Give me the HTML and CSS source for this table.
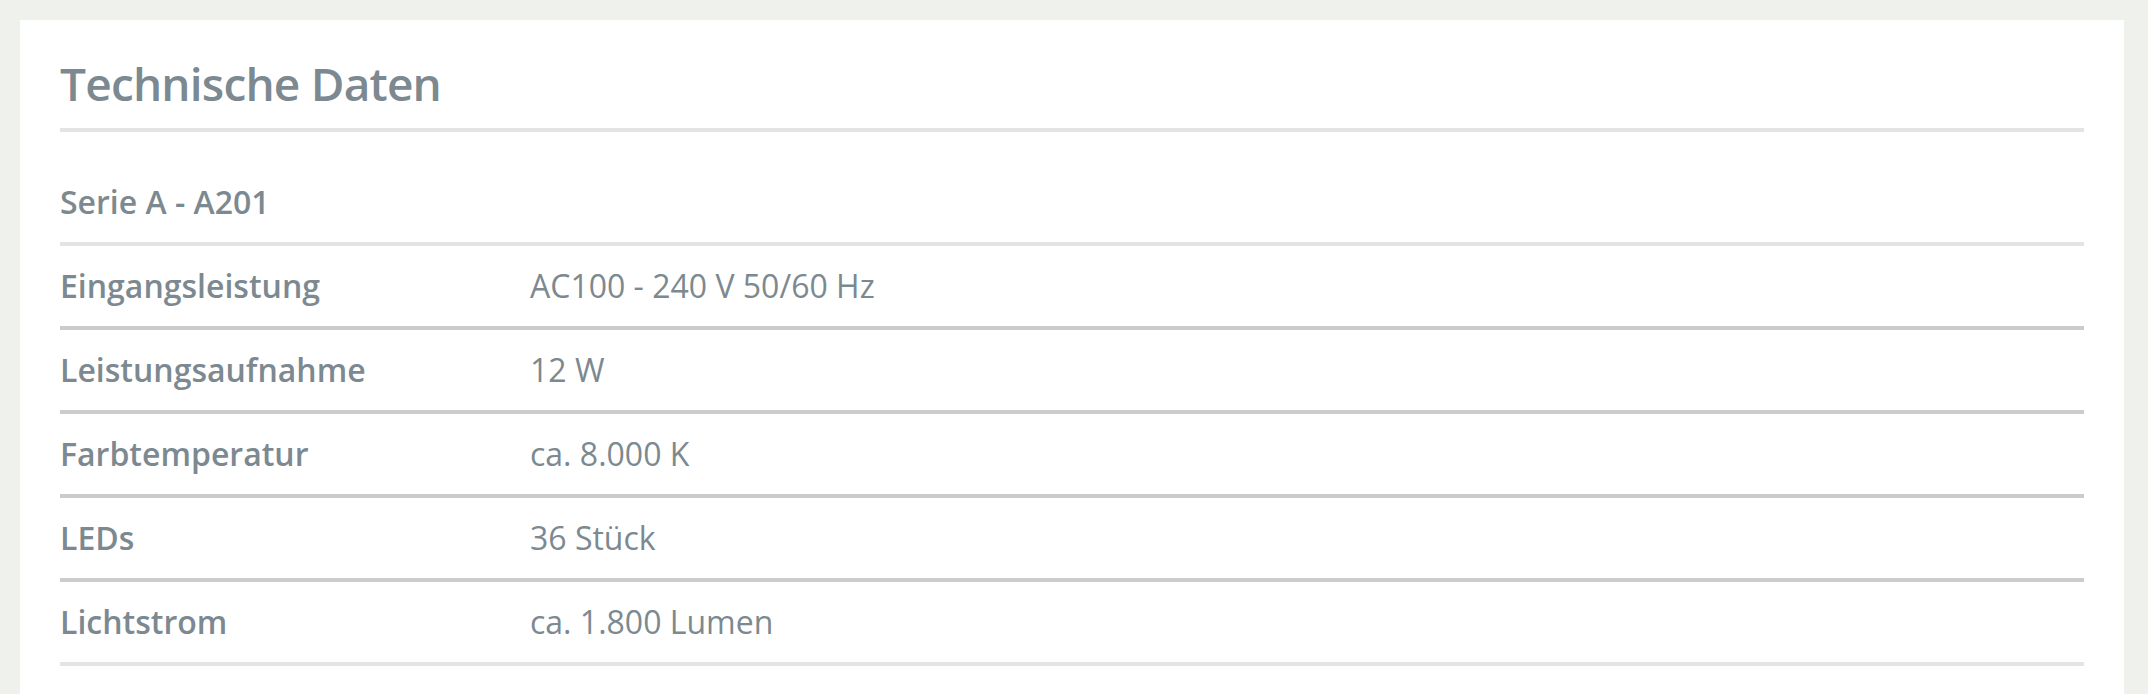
FILE: index.html
```html
<!DOCTYPE html>
<html lang="de">
<head>
  <meta charset="UTF-8">
  <title>Technische Daten</title>
  <link rel="stylesheet" href="styles.css">
</head>
<body>
<div class="panel">
  <h2 class="title">Technische Daten</h2>
  <table class="specs">
    <tr class="head"><th colspan="2">Serie A - A201</th></tr>
    <tr><th>Eingangsleistung</th><td>AC100 - 240 V 50/60 Hz</td></tr>
    <tr><th>Leistungsaufnahme</th><td>12 W</td></tr>
    <tr><th>Farbtemperatur</th><td>ca. 8.000 K</td></tr>
    <tr><th>LEDs</th><td>36 Stück</td></tr>
    <tr class="last"><th>Lichtstrom</th><td>ca. 1.800 Lumen</td></tr>
  </table>
</div>
</body>
</html>
```

FILE: styles.css
```css
    body {
      font-family: "Open Sans", Arial, sans-serif;
      background: #eff2ec;
      color: #7c8990;
      margin: 0;
      padding: 20px 24px 0 20px;
    }
    .panel {
      background: white;
      padding: 38px 40px 40px 40px;
    }
    .title {
      margin: 0 0 30px 0;
      padding-bottom: 20px;
      font-size: 46px;
      line-height: 50px;
      font-weight: 600;
      letter-spacing: -0.8px;
      border-bottom: 4px solid #e4e4e4;
    }
    .specs {
      width: 100%;
      border-collapse: collapse;
      font-size: 32px;
      line-height: 40px;
    }
    .specs th, .specs td {
      padding: 20px 0;
      text-align: left;
      border-bottom: 4px solid #cccccc;
    }
    .specs th { font-weight: 600; width: 470px; }
    .specs td { font-weight: 400; }
    .specs .head th, .specs .last th, .specs .last td { border-bottom-color: #e4e4e4; }
```
